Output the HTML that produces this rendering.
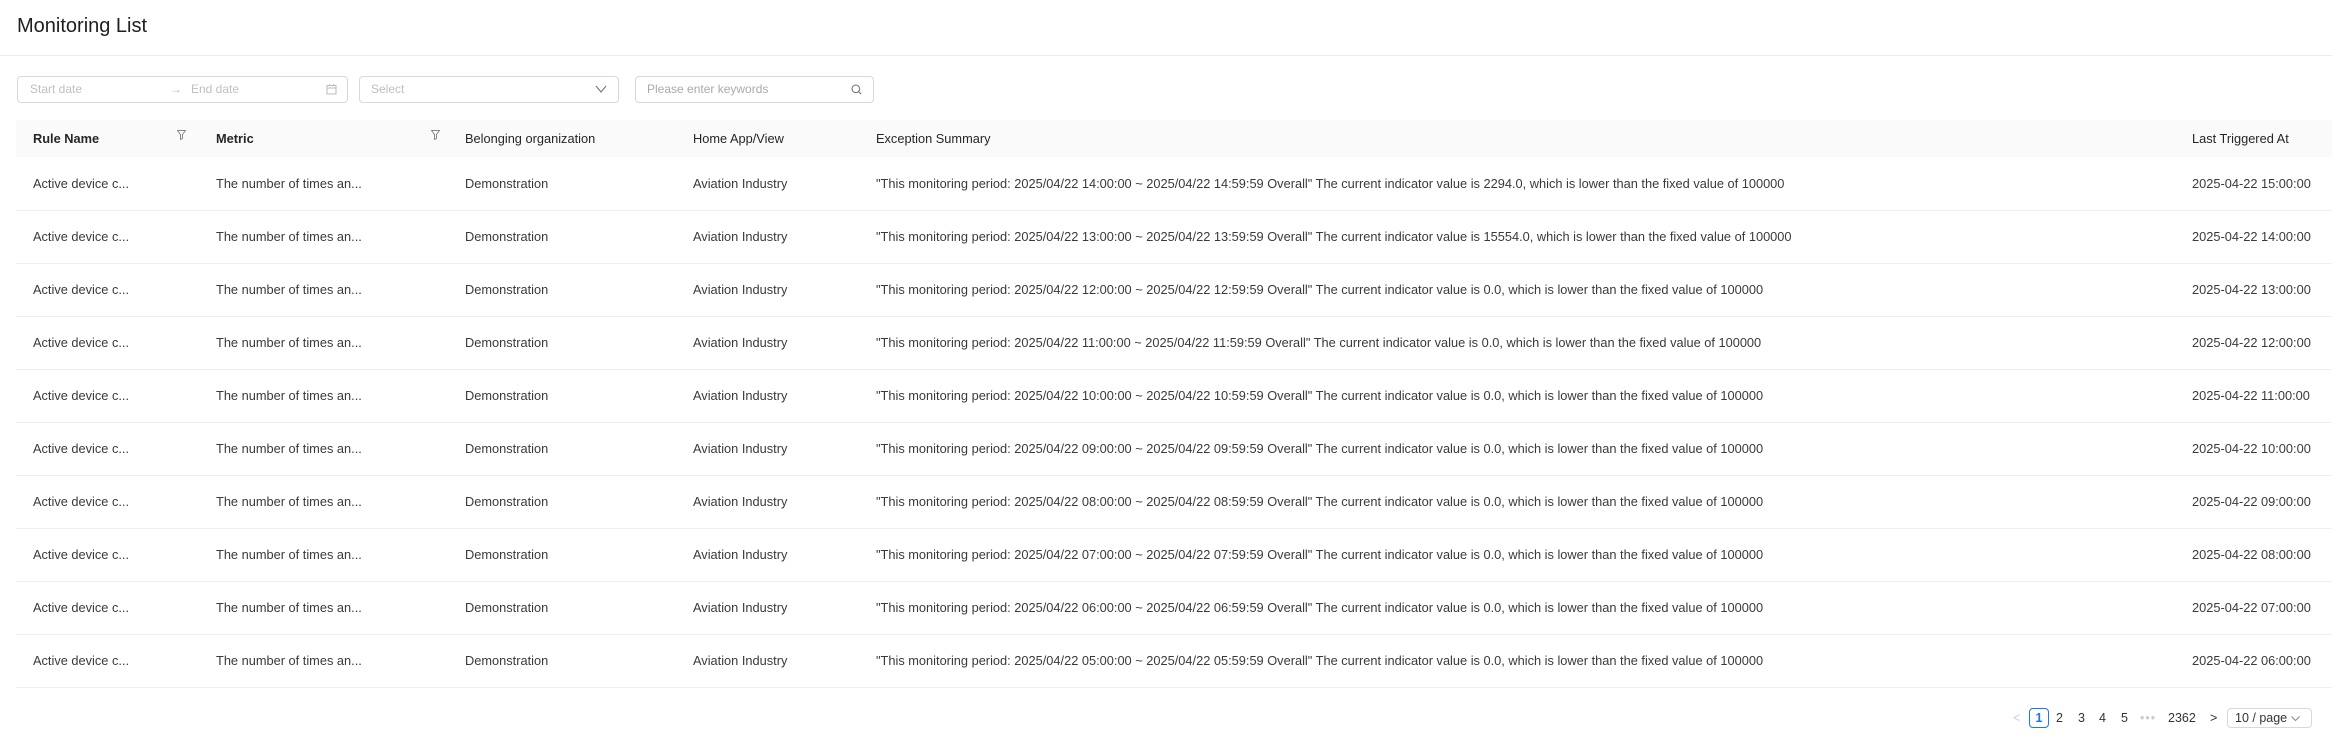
<!DOCTYPE html>
<html><head><meta charset="utf-8"><style>
*{box-sizing:border-box;margin:0;padding:0}
body{width:2332px;height:741px;background:#fff;font-family:"Liberation Sans",sans-serif;color:#262626;position:relative;overflow:hidden}
.title{position:absolute;left:17px;top:15px;font-size:20px;color:#1f1f1f}
.hl{position:absolute;left:0;right:0;top:55px;height:1px;background:#ececec}
.inp{position:absolute;top:76px;height:27px;border:1px solid #d9d9d9;border-radius:4px;font-size:12px;color:#bfbfbf;line-height:25px}
.inp span{position:absolute}
table{position:absolute;left:16px;top:120px;width:2316px;border-collapse:collapse;font-size:12.8px}
th{background:#fafafa;height:37px;text-align:left;font-weight:normal;color:#262626;padding:0;position:relative}
th.b{font-weight:bold}
td{height:53px;border-bottom:1px solid #efefef;padding:0;white-space:nowrap;color:#3a3a3a}
.f{position:absolute;top:10px}
.pg{position:absolute;top:708px;height:20px;font-size:12.5px;line-height:20px;color:#333}
</style></head><body>
<div class="title">Monitoring List</div>
<div class="hl"></div>
<div class="inp" style="left:17px;width:331px"><span style="left:12px">Start date</span><span style="left:152px;color:#bbb">→</span><span style="left:173px">End date</span>
<svg style="position:absolute;left:308px;top:7px" width="11" height="11" viewBox="0 0 11 11" fill="none" stroke="#bbb"><rect x="1" y="1.5" width="9" height="8.5"/><path d="M1 4h9M3.5 0v2M7.5 0v2"/></svg></div>
<div class="inp" style="left:359px;width:260px"><span style="left:11px">Select</span>
<svg style="position:absolute;left:235px;top:8px" width="12" height="9" viewBox="0 0 12 9" fill="none" stroke="#777" stroke-width="1.1"><path d="M1 1l5 6 5-6"/></svg></div>
<div class="inp" style="left:635px;width:239px"><span style="left:11px;color:#aaa">Please enter keywords</span>
<svg style="position:absolute;left:215px;top:7px" width="11" height="11" viewBox="0 0 11 11" fill="none" stroke="#777" stroke-width="1.1"><circle cx="4.8" cy="4.8" r="3.8"/><path d="M7.6 7.6l2.6 2.6"/></svg></div>
<table>
<colgroup><col style="width:200px"><col style="width:249px"><col style="width:228px"><col style="width:183px"><col style="width:1316px"><col></colgroup>
<tr><th class="b" style="padding-left:17px">Rule Name<svg class="f" style="left:161px" width="9" height="10" viewBox="0 0 9 10" fill="none" stroke="#888"><path d="M0.5 0.5h8L5.5 4.5v4l-2 1v-5z"/></svg></th>
<th class="b">Metric<svg class="f" style="left:215px" width="9" height="10" viewBox="0 0 9 10" fill="none" stroke="#888"><path d="M0.5 0.5h8L5.5 4.5v4l-2 1v-5z"/></svg></th>
<th>Belonging organization</th><th>Home App/View</th><th>Exception Summary</th><th>Last Triggered At</th></tr>
<tbody>
<tr><td style="padding-left:17px">Active device c...</td><td>The number of times an...</td><td>Demonstration</td><td>Aviation Industry</td><td>"This monitoring period: 2025/04/22 14:00:00 ~ 2025/04/22 14:59:59 Overall" The current indicator value is 2294.0, which is lower than the fixed value of 100000</td><td>2025-04-22 15:00:00</td></tr>
<tr><td style="padding-left:17px">Active device c...</td><td>The number of times an...</td><td>Demonstration</td><td>Aviation Industry</td><td>"This monitoring period: 2025/04/22 13:00:00 ~ 2025/04/22 13:59:59 Overall" The current indicator value is 15554.0, which is lower than the fixed value of 100000</td><td>2025-04-22 14:00:00</td></tr>
<tr><td style="padding-left:17px">Active device c...</td><td>The number of times an...</td><td>Demonstration</td><td>Aviation Industry</td><td>"This monitoring period: 2025/04/22 12:00:00 ~ 2025/04/22 12:59:59 Overall" The current indicator value is 0.0, which is lower than the fixed value of 100000</td><td>2025-04-22 13:00:00</td></tr>
<tr><td style="padding-left:17px">Active device c...</td><td>The number of times an...</td><td>Demonstration</td><td>Aviation Industry</td><td>"This monitoring period: 2025/04/22 11:00:00 ~ 2025/04/22 11:59:59 Overall" The current indicator value is 0.0, which is lower than the fixed value of 100000</td><td>2025-04-22 12:00:00</td></tr>
<tr><td style="padding-left:17px">Active device c...</td><td>The number of times an...</td><td>Demonstration</td><td>Aviation Industry</td><td>"This monitoring period: 2025/04/22 10:00:00 ~ 2025/04/22 10:59:59 Overall" The current indicator value is 0.0, which is lower than the fixed value of 100000</td><td>2025-04-22 11:00:00</td></tr>
<tr><td style="padding-left:17px">Active device c...</td><td>The number of times an...</td><td>Demonstration</td><td>Aviation Industry</td><td>"This monitoring period: 2025/04/22 09:00:00 ~ 2025/04/22 09:59:59 Overall" The current indicator value is 0.0, which is lower than the fixed value of 100000</td><td>2025-04-22 10:00:00</td></tr>
<tr><td style="padding-left:17px">Active device c...</td><td>The number of times an...</td><td>Demonstration</td><td>Aviation Industry</td><td>"This monitoring period: 2025/04/22 08:00:00 ~ 2025/04/22 08:59:59 Overall" The current indicator value is 0.0, which is lower than the fixed value of 100000</td><td>2025-04-22 09:00:00</td></tr>
<tr><td style="padding-left:17px">Active device c...</td><td>The number of times an...</td><td>Demonstration</td><td>Aviation Industry</td><td>"This monitoring period: 2025/04/22 07:00:00 ~ 2025/04/22 07:59:59 Overall" The current indicator value is 0.0, which is lower than the fixed value of 100000</td><td>2025-04-22 08:00:00</td></tr>
<tr><td style="padding-left:17px">Active device c...</td><td>The number of times an...</td><td>Demonstration</td><td>Aviation Industry</td><td>"This monitoring period: 2025/04/22 06:00:00 ~ 2025/04/22 06:59:59 Overall" The current indicator value is 0.0, which is lower than the fixed value of 100000</td><td>2025-04-22 07:00:00</td></tr>
<tr><td style="padding-left:17px">Active device c...</td><td>The number of times an...</td><td>Demonstration</td><td>Aviation Industry</td><td>"This monitoring period: 2025/04/22 05:00:00 ~ 2025/04/22 05:59:59 Overall" The current indicator value is 0.0, which is lower than the fixed value of 100000</td><td>2025-04-22 06:00:00</td></tr>
</tbody></table>
<div class="pg" style="left:2013px;color:#ccc">&lt;</div>
<div class="pg" style="left:2029px;width:20px;border:1px solid #1677ff;border-radius:4px;text-align:center;color:#1677ff;font-weight:bold;line-height:18px">1</div>
<div class="pg" style="left:2056px">2</div>
<div class="pg" style="left:2078px">3</div>
<div class="pg" style="left:2099px">4</div>
<div class="pg" style="left:2121px">5</div>
<div class="pg" style="left:2140px;color:#ccc;letter-spacing:1px">•••</div>
<div class="pg" style="left:2168px">2362</div>
<div class="pg" style="left:2210px">&gt;</div>
<div class="pg" style="left:2227px;width:85px;border:1px solid #d9d9d9;border-radius:4px;line-height:18px;padding-left:7px">10 / page <svg width="9" height="6" viewBox="0 0 9 6" fill="none" stroke="#888"><path d="M0.5 0.5l4 4 4-4"/></svg></div>
</body></html>
